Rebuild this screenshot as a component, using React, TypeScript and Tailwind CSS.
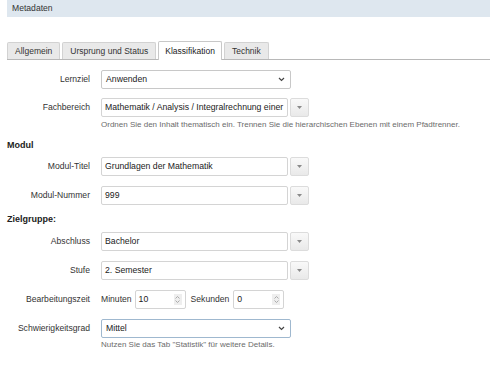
import React from 'react'

const font = { fontFamily: '"Liberation Sans", Arial, sans-serif' }

function Caret() {
  return (
    <svg width="7" height="5" viewBox="0 0 7 5" className="text-[#444]">
      <path d="M1 1 L3.5 3.5 L6 1" fill="none" stroke="currentColor" strokeWidth="1.2" />
    </svg>
  )
}

function Select({ value, focused = false }: { value: string; focused?: boolean }) {
  return (
    <div
      className={`flex h-[19px] w-[190px] items-center justify-between rounded-[2px] border bg-white pl-[4px] pr-[5px] text-[8.7px] text-[#222] ${
        focused ? 'border-[#9fb8cf]' : 'border-[#c8c8c8]'
      }`}
    >
      <span>{value}</span>
      <Caret />
    </div>
  )
}

function ComboButton() {
  return (
    <div className="ml-[2px] flex h-[19px] w-[19px] items-center justify-center rounded-[2px] border border-[#dcdcdc] bg-gradient-to-b from-[#f9f9f9] to-[#e9e9e9]">
      <svg width="5" height="3" viewBox="0 0 5 3">
        <path d="M0 0 H5 L2.5 3 Z" fill="#8a8a8a" />
      </svg>
    </div>
  )
}

function Combo({ value }: { value: string }) {
  return (
    <div className="flex items-center">
      <div className="flex h-[19px] w-[187px] items-center overflow-hidden whitespace-nowrap rounded-[2px] border border-[#d4d4d4] bg-white pl-[3px] text-[8.7px] text-[#222]">
        {value}
      </div>
      <ComboButton />
    </div>
  )
}

function Spinner({ value }: { value: string }) {
  return (
    <div className="flex h-[19px] w-[51px] items-center justify-between rounded-[2px] border border-[#d4d4d4] bg-white pl-[3px] pr-[3px] text-[8.7px] text-[#222]">
      <span>{value}</span>
      <div className="flex h-[11px] w-[8px] flex-col items-center justify-center gap-[1px] bg-[#eeeeee]">
        <svg width="5" height="3" viewBox="0 0 5 3">
          <path d="M0.5 2.5 L2.5 0.5 L4.5 2.5" fill="none" stroke="#999" strokeWidth="0.8" />
        </svg>
        <svg width="5" height="3" viewBox="0 0 5 3">
          <path d="M0.5 0.5 L2.5 2.5 L4.5 0.5" fill="none" stroke="#999" strokeWidth="0.8" />
        </svg>
      </div>
    </div>
  )
}

function Row({ label, children, className = '' }: { label: string; children: React.ReactNode; className?: string }) {
  return (
    <div className={`flex items-center ${className}`}>
      <div className="w-[83px] text-right text-[8.6px] text-[#333]">{label}</div>
      <div className="ml-[11px] flex items-center">{children}</div>
    </div>
  )
}

function Help({ children, className = '' }: { children: React.ReactNode; className?: string }) {
  return <div className={`ml-[94px] h-[12px] text-[8px] leading-[12px] text-[#6b6b6b] ${className}`}>{children}</div>
}

const tabs = ['Allgemein', 'Ursprung und Status', 'Klassifikation', 'Technik']

export default function App() {
  return (
    <div className="h-[365px] w-[500px] bg-white" style={font}>
      {/* Header */}
      <div className="ml-[7px] flex h-[17px] w-[483px] items-center bg-[#dee7ef] pl-[5px] text-[8.6px] text-[#333]">
        Metadaten
      </div>

      <div className="pl-[7px] pr-[10px]">
        {/* Tabs */}
        <div className="mt-[25px] flex h-[18px] items-end gap-[2px] border-b border-[#b8b8b8]">
          {tabs.map((t) => {
            const active = t === 'Klassifikation'
            return (
              <div
                key={t}
                className={`flex items-center rounded-t-[2px] border border-b-0 text-[8.5px] ${
                  active
                    ? '-mb-px h-[19px] border-[#c8c8c8] bg-white px-[6px] text-[#222]'
                    : 'h-[17px] border-[#d2d2d2] bg-[#e9e9e9] px-[7px] text-[#333]'
                }`}
              >
                {t}
              </div>
            )
          })}
        </div>

        {/* Form */}
        <Row label="Lernziel" className="mt-[10px]">
          <Select value="Anwenden" />
        </Row>
        <Row label="Fachbereich" className="mt-[9px]">
          <Combo value="Mathematik / Analysis / Integralrechnung einer" />
        </Row>
        <Help className="mt-[2px]">
          Ordnen Sie den Inhalt thematisch ein. Trennen Sie die hierarchischen Ebenen mit einem Pfadtrenner.
        </Help>

        <div className="mt-[8px] h-[12px] text-[9px] font-bold leading-[12px] text-[#222]">Modul</div>
        <Row label="Modul-Titel" className="mt-[6px]">
          <Combo value="Grundlagen der Mathematik" />
        </Row>
        <Row label="Modul-Nummer" className="mt-[10px]">
          <Combo value="999" />
        </Row>

        <div className="mt-[8px] h-[12px] text-[9px] font-bold leading-[12px] text-[#222]">Zielgruppe:</div>
        <Row label="Abschluss" className="mt-[7px]">
          <Combo value="Bachelor" />
        </Row>
        <Row label="Stufe" className="mt-[10px]">
          <Combo value="2. Semester" />
        </Row>
        <Row label="Bearbeitungszeit" className="mt-[10px]">
          <span className="text-[8.6px] text-[#333]">Minuten</span>
          <div className="ml-[3px]">
            <Spinner value="10" />
          </div>
          <span className="ml-[5px] text-[8.6px] text-[#333]">Sekunden</span>
          <div className="ml-[4px]">
            <Spinner value="0" />
          </div>
        </Row>
        <Row label="Schwierigkeitsgrad" className="mt-[10px]">
          <Select value="Mittel" focused />
        </Row>
        <Help className="mt-[1px]">Nutzen Sie das Tab "Statistik" für weitere Details.</Help>
      </div>
    </div>
  )
}
